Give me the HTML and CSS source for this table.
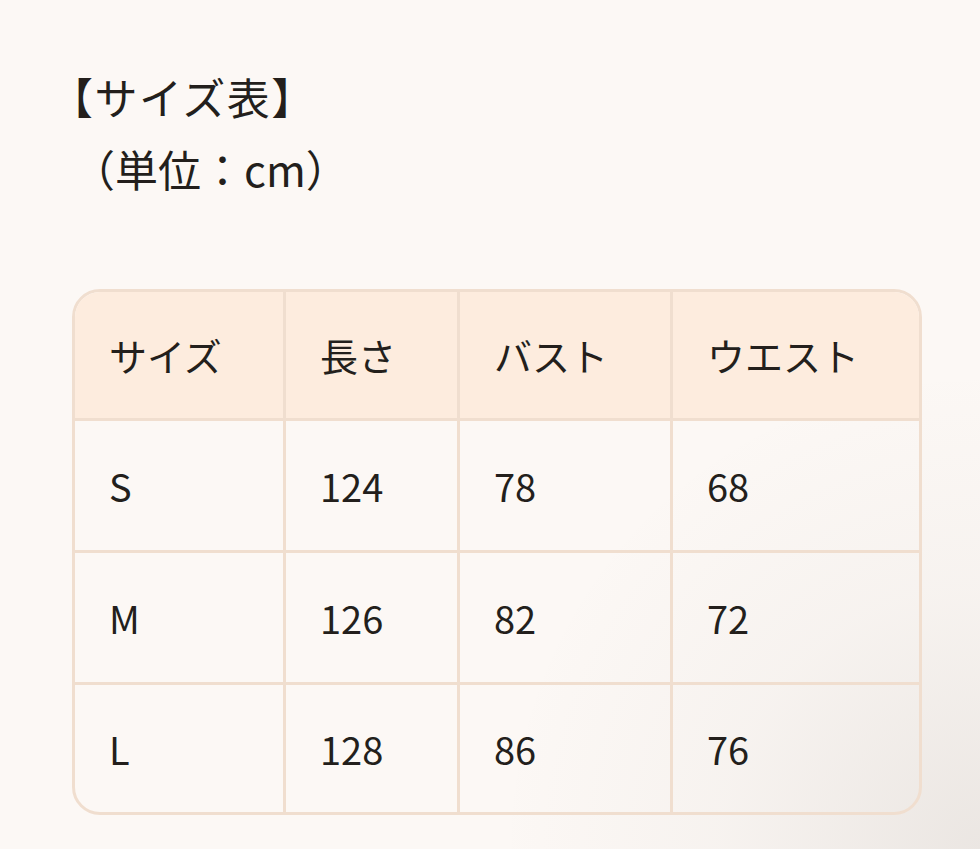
FILE: index.html
```html
<!DOCTYPE html>
<html lang="ja">
<head>
<meta charset="utf-8">
<title>サイズ表</title>
<link rel="stylesheet" href="styles.css">
</head>
<body>
<div class="page">
  <div class="title">
    <p class="title-main">【サイズ表】</p>
    <p class="title-unit">（単位：cm）</p>
  </div>
  <table class="size-table">
    <colgroup>
      <col class="c1"><col class="c2"><col class="c3"><col class="c4">
    </colgroup>
    <thead>
      <tr><th>サイズ</th><th>長さ</th><th>バスト</th><th>ウエスト</th></tr>
    </thead>
    <tbody>
      <tr><td>S</td><td>124</td><td>78</td><td>68</td></tr>
      <tr><td>M</td><td>126</td><td>82</td><td>72</td></tr>
      <tr class="last"><td>L</td><td>128</td><td>86</td><td>76</td></tr>
    </tbody>
  </table>
</div>
</body>
</html>
```

FILE: styles.css
```css
html, body {
  margin: 0;
  height: 100%;
}
body {
  background-color: #fcf8f5;
  background-image: radial-gradient(circle at 100% 100%, rgba(120, 110, 100, 0.13) 0, rgba(120, 110, 100, 0.04) 260px, rgba(252, 248, 245, 0) 480px);
  color: #231f1c;
  font-family: "Noto Sans CJK JP", sans-serif;
  font-size: 38px;
}
.page {
  padding: 60px 0 0 0;
}
.title {
  font-size: 43px;
  line-height: 72px;
}
.title p {
  margin: 0;
}
.title-main {
  padding-left: 50px;
  letter-spacing: 1.5px;
}
.title-unit {
  padding-left: 72px;
}
.size-table {
  margin: 85px 0 0 72px;
  width: 850px;
  border-collapse: separate;
  border-spacing: 0;
  border: 3px solid #f0decf;
  border-radius: 28px;
  overflow: hidden;
  table-layout: fixed;
}
.c1 { width: 211px; }
.c2 { width: 174px; }
.c3 { width: 213px; }
.c4 { width: auto; }
.size-table th,
.size-table td {
  text-align: left;
  font-weight: 400;
  padding: 0 0 0 34px;
  height: 129px;
  vertical-align: middle;
  border-right: 3px solid #f0decf;
  border-bottom: 3px solid #f0decf;
  line-height: 1;
}
.size-table th {
  background: #fdecde;
  height: 126px;
}
.size-table tr > :last-child {
  border-right: none;
}
.size-table tr.last td {
  border-bottom: none;
  height: 127px;
}
```
